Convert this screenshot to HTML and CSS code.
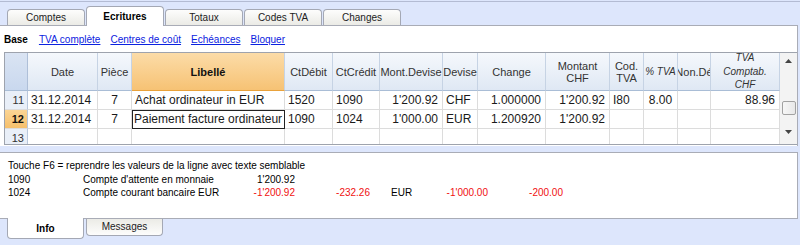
FILE: index.html
```html
<!DOCTYPE html>
<html lang="fr">
<head>
    <meta charset="UTF-8">
    <title>Ecritures</title>
    <link rel="stylesheet" href="styles.css">
</head>
<body>
    <div class="tabbar">
        <div class="tab">Comptes</div>
        <div class="tab active">Ecritures</div>
        <div class="tab">Totaux</div>
        <div class="tab">Codes TVA</div>
        <div class="tab">Changes</div>
    </div>

    <div class="panel">
        <div class="toolbar">
            <b>Base</b>
            <a href="#">TVA complète</a>
            <a href="#">Centres de coût</a>
            <a href="#">Echéances</a>
            <a href="#">Bloquer</a>
        </div>

        <div class="grid-wrap">
            <div class="grid">
                <!-- header -->
                <div class="h corner"></div>
                <div class="h">Date</div>
                <div class="h">Pièce</div>
                <div class="h sel">Libellé</div>
                <div class="h">CtDébit</div>
                <div class="h">CtCrédit</div>
                <div class="h">Mont.Devise</div>
                <div class="h">Devise</div>
                <div class="h">Change</div>
                <div class="h">Montant<br>CHF</div>
                <div class="h">Cod.<br>TVA</div>
                <div class="h it">% TVA</div>
                <div class="h"><span class="clip">Non.Dé</span></div>
                <div class="h it tall">TVA<br>Comptab.<br>CHF</div>

                <!-- row 11 -->
                <div class="rn">11</div>
                <div class="c">31.12.2014</div>
                <div class="c ctr">7</div>
                <div class="c">Achat ordinateur in EUR</div>
                <div class="c">1520</div>
                <div class="c">1090</div>
                <div class="c r">1'200.92</div>
                <div class="c">CHF</div>
                <div class="c r">1.000000</div>
                <div class="c r">1'200.92</div>
                <div class="c">I80</div>
                <div class="c ctr">8.00</div>
                <div class="c"></div>
                <div class="c r">88.96</div>

                <!-- row 12 -->
                <div class="rn cur">12</div>
                <div class="c">31.12.2014</div>
                <div class="c ctr">7</div>
                <div class="c edit">Paiement facture ordinateur</div>
                <div class="c">1090</div>
                <div class="c">1024</div>
                <div class="c r">1'000.00</div>
                <div class="c">EUR</div>
                <div class="c r">1.200920</div>
                <div class="c r">1'200.92</div>
                <div class="c"></div>
                <div class="c"></div>
                <div class="c"></div>
                <div class="c"></div>

                <!-- row 13 -->
                <div class="rn">13</div>
                <div class="c"></div>
                <div class="c"></div>
                <div class="c"></div>
                <div class="c"></div>
                <div class="c"></div>
                <div class="c"></div>
                <div class="c"></div>
                <div class="c"></div>
                <div class="c"></div>
                <div class="c"></div>
                <div class="c"></div>
                <div class="c"></div>
                <div class="c"></div>
            </div>

            <div class="scrollbar">
                <svg class="arrow" width="7" height="4" viewBox="0 0 7 4"><path d="M0 4 L3.5 0 L7 4 Z" fill="#444"/></svg>
                <div class="thumb"></div>
                <svg class="arrow" width="7" height="4" viewBox="0 0 7 4"><path d="M0 0 L3.5 4 L7 0 Z" fill="#444"/></svg>
            </div>
        </div>
    </div>

    <div class="info">
        <div class="line full">Touche F6 = reprendre les valeurs de la ligne avec texte semblable</div>
        <div class="line">
            <span>1090</span>
            <span>Compte d'attente en monnaie</span>
            <span class="num">1'200.92</span>
        </div>
        <div class="line">
            <span>1024</span>
            <span>Compte courant bancaire EUR</span>
            <span class="num neg">-1'200.92</span>
            <span class="num neg">-232.26</span>
            <span class="cur">EUR</span>
            <span class="num neg">-1'000.00</span>
            <span class="num neg">-200.00</span>
        </div>
    </div>

    <div class="btabs">
        <div class="btab active">Info</div>
        <div class="btab">Messages</div>
    </div>
</body>
</html>
```

FILE: styles.css
```css
body {
    margin: 0;
    width: 800px;
    height: 245px;
    overflow: hidden;
    background-color: #dde6fc;
    font-family: "Liberation Sans", Arial, sans-serif;
    color: #111;
}

/* top tabs */
.tabbar {
    margin-top: 1px;
    height: 23px;
    border-top: 1px solid #b3bbd3;
    display: flex;
    align-items: flex-end;
    gap: 1px;
    padding-left: 7px;
    font-size: 10px;
}
.tab {
    width: 78px;
    height: 16px;
    line-height: 16px;
    text-align: center;
    box-sizing: border-box;
    border: 1px solid #a4a8b4;
    border-bottom: none;
    border-radius: 4px 4px 0 0;
    background: linear-gradient(#fdfdfc, #ebebe6);
    color: #222;
}
.tab.active {
    height: 20px;
    line-height: 19px;
    margin-bottom: -1px;
    position: relative;
    z-index: 1;
    background: #fff;
    font-weight: bold;
    color: #000;
}

/* main panel */
.panel {
    width: 798px;
    box-sizing: border-box;
    background-color: #fff;
    border-top: 1px solid #a9acb6;
    border-right: 1px solid #a9acb6;
    padding-bottom: 1px;
}
.toolbar {
    height: 26px;
    display: flex;
    align-items: center;
    gap: 10px;
    padding-left: 4px;
    font-size: 10px;
}
.toolbar b {
    color: #000;
    margin-right: 1px;
}
.toolbar a {
    color: #0b22e0;
    text-decoration: underline;
}

.grid-wrap {
    display: flex;
    margin-left: 4px;
    height: 91px;
    border: 1px solid #9ea3ad;
    border-right: none;
    overflow: hidden;
}
.grid {
    display: grid;
    grid-template-columns: 23px 70px 34px 153px 48px 47px 63px 35px 68px 64px 34px 34px 33px 69px;
    grid-template-rows: 38px 19px 19px 19px;
    font-size: 12px;
}
.grid > div {
    box-sizing: border-box;
    border-right: 1px solid #dcdcdc;
    border-bottom: 1px solid #dcdcdc;
    overflow: hidden;
    white-space: nowrap;
}

.h {
    display: flex;
    align-items: center;
    justify-content: center;
    text-align: center;
    font-size: 11px;
    line-height: 12px;
    color: #333;
    background: linear-gradient(#f5f8fc, #dfe8f4);
    border-right-color: #c6d3e4 !important;
    border-bottom-color: #a9bdd6 !important;
}
.h.corner {
    background: linear-gradient(#dae4f3, #c9d8ee);
    border-right-color: #aebfd8 !important;
}
.h.sel {
    background: linear-gradient(#fcdca8, #f6c274);
    border-bottom-color: #e9a23b !important;
    font-weight: bold;
    color: #111;
}
.h.it {
    font-style: italic;
    font-size: 10px;
}
.h.tall {
    line-height: 13.5px;
}
.h .clip {
    flex-shrink: 0;
}

.rn {
    text-align: right;
    padding-right: 3px;
    font-size: 11px;
    line-height: 18px;
    color: #333;
    background-color: #e9eff8;
    border-right-color: #b8c7dc !important;
}
.rn.cur {
    background: linear-gradient(#fbd595, #f6c06c);
    font-weight: bold;
    color: #111;
}

.c {
    padding: 0 3px;
    line-height: 18px;
    color: #1a1a1a;
}
.c.r {
    text-align: right;
    padding-right: 4px;
}
.c.ctr {
    text-align: center;
}
.c.edit {
    outline: 1px solid #222;
    outline-offset: -1px;
    padding-left: 2px;
}

.scrollbar {
    width: 18px;
    box-sizing: border-box;
    background-color: #f3f3f3;
    display: flex;
    flex-direction: column;
    align-items: center;
    padding-top: 6px;
}
.scrollbar .thumb {
    width: 14px;
    height: 14px;
    box-sizing: border-box;
    margin: 38px 0 15px;
    background: linear-gradient(to right, #f7f7f7, #e8e8e8);
    border: 1px solid #a2a2a2;
    border-radius: 2px;
}

/* info panel */
.info {
    margin-top: 6px;
    width: 798px;
    height: 67px;
    box-sizing: border-box;
    background-color: #fff;
    border-top: 1px solid #a9acb6;
    border-right: 1px solid #a9acb6;
    border-bottom: 1px solid #a9acb6;
    padding: 6px 0 0 8px;
    font-size: 10px;
    color: #000;
}
.line {
    display: grid;
    grid-template-columns: 75px 150px 62px 75px 21px 34px 63px 75px;
    height: 13.5px;
    line-height: 13.5px;
    white-space: nowrap;
}
.line.full {
    display: block;
}
.line .num {
    text-align: right;
}
.line .neg {
    color: #f01010;
}
.line .cur {
    grid-column: 6;
}

/* bottom tabs */
.btabs {
    display: flex;
    gap: 2px;
    padding-left: 7px;
    font-size: 10px;
}
.btab {
    width: 77px;
    height: 17px;
    line-height: 15px;
    text-align: center;
    box-sizing: border-box;
    border: 1px solid #a4a8b4;
    border-top: none;
    border-radius: 0 0 4px 4px;
    background: linear-gradient(#ebebe6, #fdfdfc);
    color: #222;
}
.btab.active {
    height: 21px;
    line-height: 22px;
    margin-top: -1px;
    position: relative;
    background: #fff;
    font-weight: bold;
    color: #000;
}
```
